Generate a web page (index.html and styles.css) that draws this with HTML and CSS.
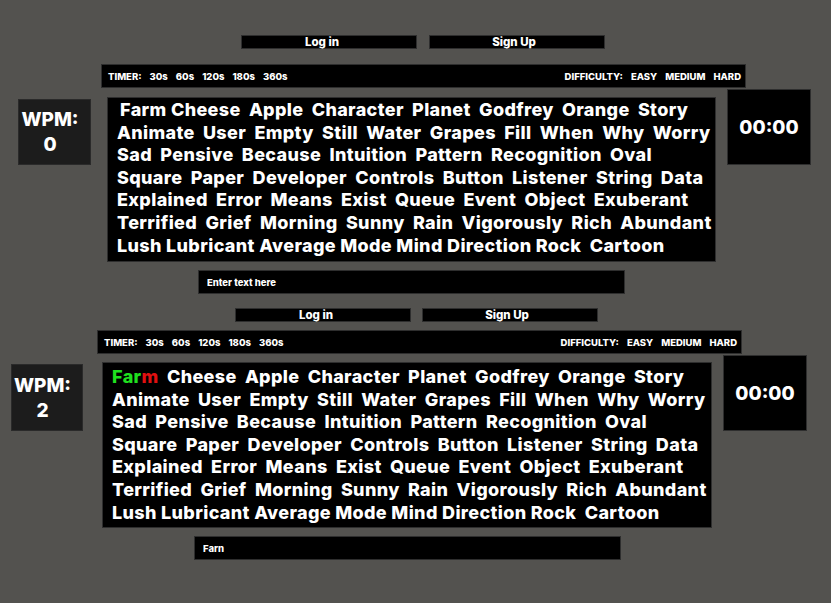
FILE: index.html
```html
<!DOCTYPE html>
<html lang="en">
<head>
    <meta charset="UTF-8">
    <meta name="viewport" content="width=device-width, initial-scale=1.0">
    <title>Typing Test</title>
    <link rel="stylesheet" href="styles.css">
</head>
<body>
    <!-- idle state -->
    <section class="screen screen-idle">
        <div class="auth">
            <button class="auth-btn login-btn">Log in</button>
            <button class="auth-btn">Sign Up</button>
        </div>
        <div class="options">
            <div class="option-group">
                <span class="option-label">TIMER:</span>
                <span>30s</span><span>60s</span><span>120s</span><span>180s</span><span>360s</span>
            </div>
            <div class="option-group">
                <span class="option-label">DIFFICULTY:</span>
                <span>EASY</span><span>MEDIUM</span><span>HARD</span>
            </div>
        </div>
        <div class="game">
            <div class="wpm">WPM:<br>0</div>
            <div class="words">
                <div class="line first-line"><span class="word snug">Farm</span> <span class="word">Cheese</span> <span class="word">Apple</span> <span class="word">Character</span> <span class="word">Planet</span> <span class="word">Godfrey</span> <span class="word">Orange</span> <span class="word">Story</span></div>
                <div class="line"><span class="word">Animate</span> <span class="word">User</span> <span class="word">Empty</span> <span class="word">Still</span> <span class="word">Water</span> <span class="word">Grapes</span> <span class="word">Fill</span> <span class="word">When</span> <span class="word">Why</span> <span class="word">Worry</span></div>
                <div class="line"><span class="word">Sad</span> <span class="word">Pensive</span> <span class="word">Because</span> <span class="word">Intuition</span> <span class="word">Pattern</span> <span class="word">Recognition</span> <span class="word">Oval</span></div>
                <div class="line"><span class="word">Square</span> <span class="word">Paper</span> <span class="word">Developer</span> <span class="word">Controls</span> <span class="word">Button</span> <span class="word">Listener</span> <span class="word">String</span> <span class="word">Data</span></div>
                <div class="line"><span class="word">Explained</span> <span class="word">Error</span> <span class="word">Means</span> <span class="word">Exist</span> <span class="word">Queue</span> <span class="word">Event</span> <span class="word">Object</span> <span class="word">Exuberant</span></div>
                <div class="line"><span class="word">Terrified</span> <span class="word">Grief</span> <span class="word">Morning</span> <span class="word">Sunny</span> <span class="word">Rain</span> <span class="word">Vigorously</span> <span class="word">Rich</span> <span class="word">Abundant</span></div>
                <div class="line"><span class="word snug">Lush</span> <span class="word snug">Lubricant</span> <span class="word snug">Average</span> <span class="word snug">Mode</span> <span class="word snug">Mind</span> <span class="word snug">Direction</span> <span class="word">Rock</span> <span class="word">Cartoon</span></div>
            </div>
            <div class="clock">00:00</div>
        </div>
        <input class="entry" type="text" placeholder="Enter text here">
    </section>

    <!-- typing state -->
    <section class="screen screen-typing">
        <div class="auth">
            <button class="auth-btn login-btn">Log in</button>
            <button class="auth-btn">Sign Up</button>
        </div>
        <div class="options">
            <div class="option-group">
                <span class="option-label">TIMER:</span>
                <span>30s</span><span>60s</span><span>120s</span><span>180s</span><span>360s</span>
            </div>
            <div class="option-group">
                <span class="option-label">DIFFICULTY:</span>
                <span>EASY</span><span>MEDIUM</span><span>HARD</span>
            </div>
        </div>
        <div class="game">
            <div class="wpm">WPM:<br>2</div>
            <div class="words">
                <div class="line"><span class="word"><span class="correct">Far</span><span class="wrong">m</span></span> <span class="word">Cheese</span> <span class="word">Apple</span> <span class="word">Character</span> <span class="word">Planet</span> <span class="word">Godfrey</span> <span class="word">Orange</span> <span class="word">Story</span></div>
                <div class="line"><span class="word">Animate</span> <span class="word">User</span> <span class="word">Empty</span> <span class="word">Still</span> <span class="word">Water</span> <span class="word">Grapes</span> <span class="word">Fill</span> <span class="word">When</span> <span class="word">Why</span> <span class="word">Worry</span></div>
                <div class="line"><span class="word">Sad</span> <span class="word">Pensive</span> <span class="word">Because</span> <span class="word">Intuition</span> <span class="word">Pattern</span> <span class="word">Recognition</span> <span class="word">Oval</span></div>
                <div class="line"><span class="word">Square</span> <span class="word">Paper</span> <span class="word">Developer</span> <span class="word">Controls</span> <span class="word">Button</span> <span class="word">Listener</span> <span class="word">String</span> <span class="word">Data</span></div>
                <div class="line"><span class="word">Explained</span> <span class="word">Error</span> <span class="word">Means</span> <span class="word">Exist</span> <span class="word">Queue</span> <span class="word">Event</span> <span class="word">Object</span> <span class="word">Exuberant</span></div>
                <div class="line"><span class="word">Terrified</span> <span class="word">Grief</span> <span class="word">Morning</span> <span class="word">Sunny</span> <span class="word">Rain</span> <span class="word">Vigorously</span> <span class="word">Rich</span> <span class="word">Abundant</span></div>
                <div class="line"><span class="word snug">Lush</span> <span class="word snug">Lubricant</span> <span class="word snug">Average</span> <span class="word snug">Mode</span> <span class="word snug">Mind</span> <span class="word snug">Direction</span> <span class="word">Rock</span> <span class="word">Cartoon</span></div>
            </div>
            <div class="clock">00:00</div>
        </div>
        <input class="entry" type="text" value="Farn">
    </section>
</body>
</html>
```

FILE: styles.css
```css
body {
    margin: 0;
    background: #53524f;
    font-family: 'Inter', sans-serif;
    font-weight: 800;
    color: white;
}
.screen {
    display: flex;
    flex-direction: column;
    align-items: flex-start;
}
.auth {
    display: flex;
    gap: 12px;
}
.auth-btn {
    width: 176px;
    height: 14px;
    padding: 0 6px 0 0;
    background: black;
    border: 1px solid #2e2e2e;
    color: white;
    font-family: 'Inter', sans-serif;
    font-weight: 800;
    font-size: 11.5px;
    line-height: 12px;
    cursor: pointer;
}
.login-btn {
    padding-right: 14px;
}
.options {
    box-sizing: border-box;
    width: 645px;
    height: 24px;
    padding: 0 4px 0 6px;
    display: flex;
    justify-content: space-between;
    align-items: center;
    background: black;
    border: 1px solid #2e2e2e;
    font-size: 9.5px;
}
.option-group {
    display: flex;
    gap: 8px;
}
.game {
    display: flex;
    align-items: flex-start;
}
.wpm {
    box-sizing: border-box;
    width: 73px;
    height: 66px;
    padding-right: 9px;
    display: flex;
    align-items: center;
    justify-content: center;
    text-align: center;
    background: #1c1c1c;
    border: 1px solid #2a2a2a;
    font-size: 19px;
    line-height: 25px;
}
.words {
    box-sizing: border-box;
    width: 609px;
    height: 165px;
    padding: 1px 0 0 9px;
    background: black;
    border: 1px solid #2e2e2e;
    font-size: 18px;
    line-height: 22.6px;
    letter-spacing: 0.35px;
    white-space: nowrap;
}
.word {
    margin-right: 4px;
}
.word.snug {
    margin-right: 0;
}
.first-line {
    padding-left: 3px;
}
.correct {
    color: #1fe01f;
}
.wrong {
    color: #e01010;
}
.clock {
    box-sizing: border-box;
    width: 84px;
    height: 76px;
    margin-left: 11px;
    display: flex;
    align-items: center;
    justify-content: center;
    background: black;
    border: 1px solid #2e2e2e;
    font-size: 19px;
}
.entry {
    box-sizing: border-box;
    width: 427px;
    height: 24px;
    margin-top: 8px;
    padding: 0 8px;
    background: black;
    border: 1px solid #2e2e2e;
    outline: none;
    color: white;
    font-family: 'Inter', sans-serif;
    font-weight: 800;
    font-size: 9.5px;
}
.entry::placeholder {
    color: white;
    opacity: 1;
}

/* first screenshot */
.screen-idle {
    padding-top: 35px;
}
.screen-idle .auth {
    margin-left: 241px;
}
.screen-idle .options {
    margin: 15px 0 0 101px;
}
.screen-idle .game {
    margin: 1px 0 0 18px;
}
.screen-idle .wpm {
    margin-top: 10px;
}
.screen-idle .words {
    margin: 8px 0 0 16px;
}
.screen-idle .entry {
    margin-left: 198px;
}

/* second screenshot */
.screen-typing {
    padding-top: 14px;
}
.screen-typing .auth {
    margin-left: 235px;
    gap: 11px;
}
.screen-typing .options {
    margin: 8px 0 0 97px;
}
.screen-typing .game {
    margin: 1px 0 0 11px;
}
.screen-typing .wpm {
    width: 72px;
    height: 67px;
    margin-top: 9px;
}
.screen-typing .words {
    width: 610px;
    height: 166px;
    margin: 7px 0 0 19px;
    padding: 3px 0 0 9px;
}
.screen-typing .entry {
    margin-left: 194px;
}
```
